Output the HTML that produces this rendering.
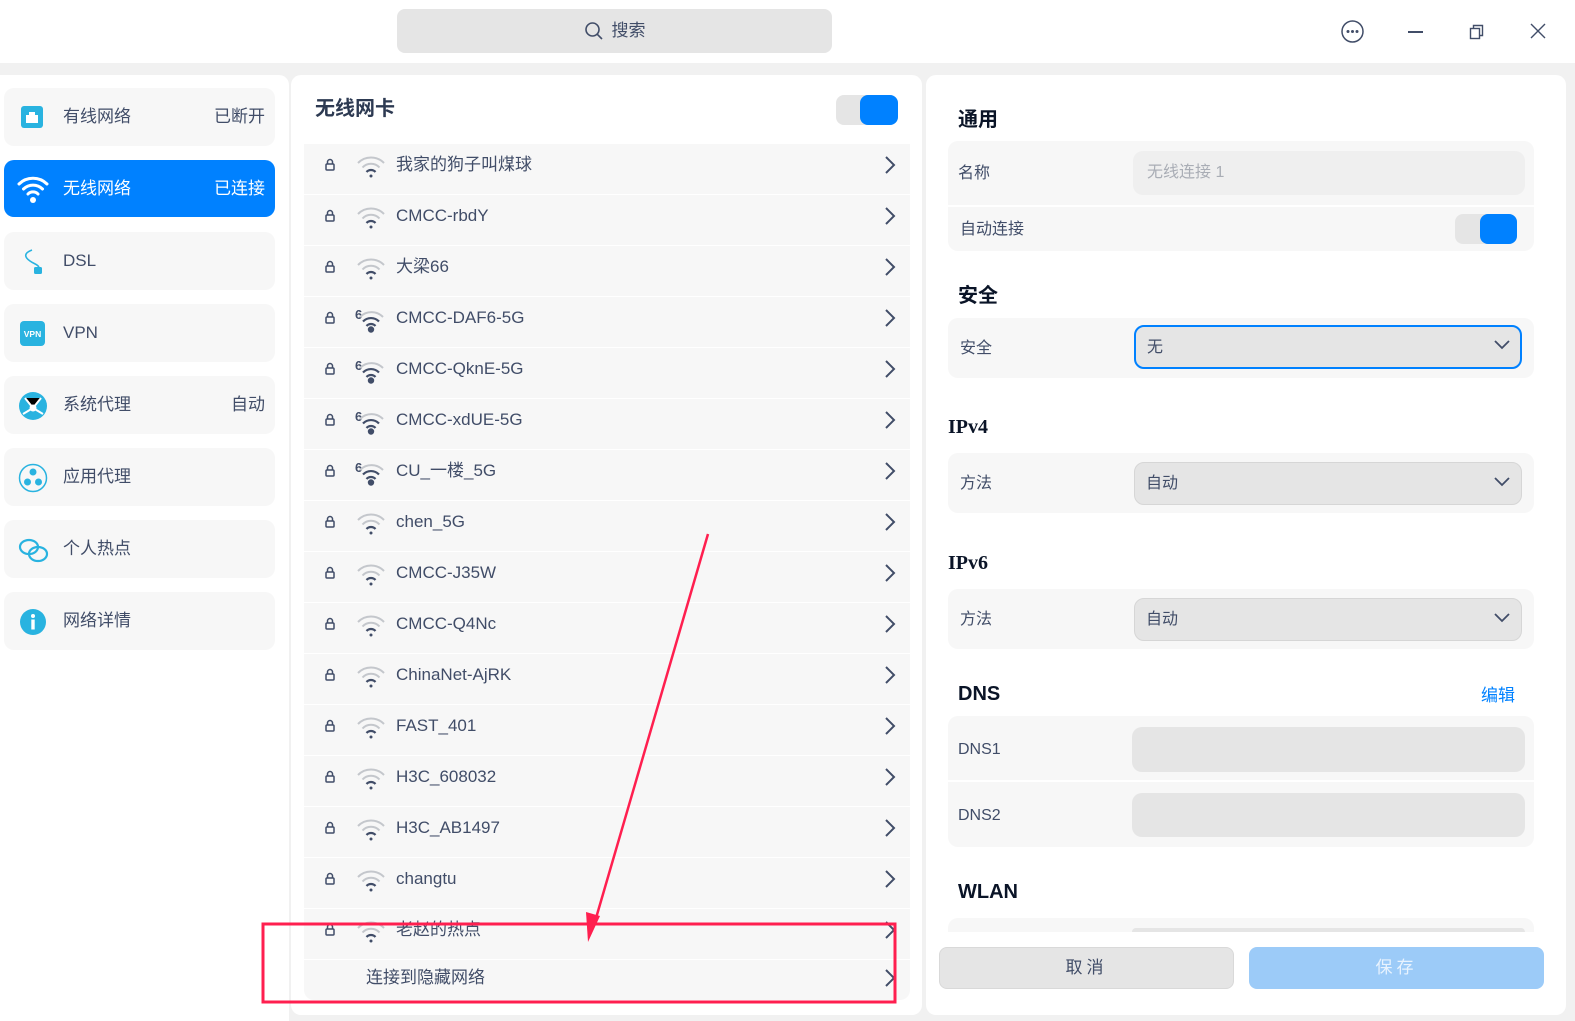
<!DOCTYPE html>
<html><head><meta charset="utf-8">
<style>
*{margin:0;padding:0;box-sizing:border-box}
html,body{overflow:hidden}
body{width:1575px;height:1021px;background:#f1f1f1;position:relative;font-family:"Liberation Sans","Noto Sans CJK SC",sans-serif;color:#414d68;line-height:22px}
.a{position:absolute}
.top{left:0;top:0;width:1575px;height:63px;background:#fff}
.search{left:397px;top:9px;width:435px;height:44px;background:#e5e5e5;border-radius:8px;font-size:17px;color:#414d68;display:flex;align-items:center;justify-content:center;gap:8px}
.panel{background:#fff;border-radius:10px}
.nav{left:4px;width:271px;height:58px;background:#f7f7f7;border-radius:10px;font-size:17px}
.nav .t{position:absolute;left:59px;top:18px}
.nav .r{position:absolute;right:10px;top:18px}
.nav svg{position:absolute;left:14px;top:15px}
.row{left:304px;width:606px;height:50px;background:#f7f7f7;font-size:17px}
.row .lk{position:absolute;left:21px;top:14px}
.row .wf{position:absolute;left:51px;top:8px}
.row .n{position:absolute;left:92px;top:10px;line-height:22px}
.row .ch{position:absolute;left:580px;top:11px}
.h{font-weight:bold;font-size:20px;color:#0a1427}
.grp{left:948px;width:586px;background:#f7f7f7;border-radius:10px}
.lbl{font-size:16px}
.inp{background:#e5e5e5;border-radius:10px}
.sel{background:#e5e5e5;border-radius:10px;border:1px solid #d6d6d6;font-size:16px}
</style></head><body>
<div class="a top"></div>
<div class="a search"><svg width="20" height="20" viewBox="0 0 20 20"><circle cx="8.5" cy="8.5" r="6.5" fill="none" stroke="#414d68" stroke-width="1.6"/><path d="M13.3 13.3L18 18" stroke="#414d68" stroke-width="1.6"/></svg>搜索</div>
<svg class="a" style="left:1340px;top:19px" width="25" height="25" viewBox="0 0 25 25"><circle cx="12.5" cy="12.5" r="10.5" fill="none" stroke="#414d68" stroke-width="1.5"/><circle cx="8" cy="12.5" r="1.5" fill="#414d68"/><circle cx="12.5" cy="12.5" r="1.5" fill="#414d68"/><circle cx="17" cy="12.5" r="1.5" fill="#414d68"/></svg>
<div class="a" style="left:1408px;top:31px;width:15px;height:1.5px;background:#414d68"></div>
<svg class="a" style="left:1469px;top:24px" width="16" height="16" viewBox="0 0 16 16"><rect x="1.5" y="4.5" width="9" height="10" fill="none" stroke="#414d68" stroke-width="1.4"/><path d="M4.5 4.5V1.5h9v10h-3" fill="none" stroke="#414d68" stroke-width="1.4"/></svg>
<svg class="a" style="left:1530px;top:23px" width="16" height="16" viewBox="0 0 16 16"><path d="M1 1L15 15M15 1L1 15" stroke="#414d68" stroke-width="1.4"/></svg>

<div class="a panel" style="left:0;top:75px;width:289px;height:946px;border-radius:0 10px 0 0"></div>
<div class="a panel" style="left:291px;top:75px;width:631px;height:940px"></div>
<div class="a panel" style="left:926px;top:75px;width:640px;height:940px"></div>

<div class="a nav" style="top:88px"><svg width="28" height="28" viewBox="0 0 28 28"><rect x="3" y="3" width="22" height="22" rx="3" fill="#29b3e0"/><path d="M8 20V12h3V9h6v3h3v8z" fill="#fff"/></svg><span class="t">有线网络</span><span class="r">已断开</span></div>
<div class="a nav" style="top:160px;background:#0081ff;color:#fff;height:57px"><svg width="34" height="30" viewBox="0 0 34 30" style="left:12px;top:14px"><path d="M3 10a20 20 0 0 1 28 0M7.5 15a13.5 13.5 0 0 1 19 0M12 20a7 7 0 0 1 10 0" fill="none" stroke="#fff" stroke-width="3" stroke-linecap="round"/><circle cx="17" cy="26" r="3" fill="#fff"/></svg><span class="t">无线网络</span><span class="r">已连接</span></div>
<div class="a nav" style="top:232px"><svg width="28" height="30" viewBox="0 0 28 30"><path d="M14 3C6 6 6 10 12 14c4 3 7 3 9 6" fill="none" stroke="#29b3e0" stroke-width="1.6"/><rect x="16" y="20" width="8" height="7" rx="1.5" fill="#29b3e0"/></svg><span class="t">DSL</span></div>
<div class="a nav" style="top:304px"><svg width="28" height="28" viewBox="0 0 28 28"><rect x="2" y="2" width="25" height="25" rx="4" fill="#29b3e0"/><text x="14.5" y="18" font-size="8.5" font-weight="bold" fill="#fff" text-anchor="middle" font-family="Liberation Sans">VPN</text></svg><span class="t">VPN</span></div>
<div class="a nav" style="top:376px"><svg width="30" height="30" viewBox="0 0 30 30"><circle cx="15" cy="15" r="14" fill="#29b3e0"/><path d="M7 7L15 17L23 7M15 17L5 23M15 17L25 23" stroke="#fff" stroke-width="2"/><circle cx="15" cy="17" r="3.5" fill="#fff"/></svg><span class="t">系统代理</span><span class="r">自动</span></div>
<div class="a nav" style="top:448px"><svg width="30" height="30" viewBox="0 0 30 30"><circle cx="15" cy="15" r="13.5" fill="none" stroke="#29b3e0" stroke-width="1.5"/><circle cx="15" cy="9" r="3.5" fill="#29b3e0"/><circle cx="9.5" cy="19" r="3.5" fill="#29b3e0"/><circle cx="20.5" cy="19" r="3.5" fill="#29b3e0"/></svg><span class="t">应用代理</span></div>
<div class="a nav" style="top:520px"><svg width="32" height="30" viewBox="0 0 32 30"><ellipse cx="11" cy="12" rx="9" ry="7" fill="none" stroke="#29b3e0" stroke-width="2.2"/><ellipse cx="20" cy="19" rx="9" ry="7" fill="none" stroke="#29b3e0" stroke-width="2.2"/></svg><span class="t">个人热点</span></div>
<div class="a nav" style="top:592px"><svg width="30" height="30" viewBox="0 0 30 30"><circle cx="15" cy="15" r="13" fill="#29b3e0"/><circle cx="15" cy="9" r="2" fill="#fff"/><rect x="13.3" y="12.5" width="3.4" height="10" fill="#fff"/></svg><span class="t">网络详情</span></div>

<div class="a" style="left:315px;top:98px;font-size:20px;font-weight:bold;color:#2d3a52">无线网卡</div>
<div class="a" style="left:836px;top:95px;width:62px;height:30px;background:#e5e5e5;border-radius:8px"></div>
<div class="a" style="left:860px;top:95px;width:38px;height:30px;background:#0081ff;border-radius:8px"></div>

<div id="rows"></div>
<script>
var names=["我家的狗子叫煤球","CMCC-rbdY","大梁66","CMCC-DAF6-5G","CMCC-QknE-5G","CMCC-xdUE-5G","CU_一楼_5G","chen_5G","CMCC-J35W","CMCC-Q4Nc","ChinaNet-AjRK","FAST_401","H3C_608032","H3C_AB1497","changtu","老赵的热点"];
var six=[3,4,5,6];var h="";
for(var i=0;i<names.length;i++){var t=144+i*51;var s=six.indexOf(i)>=0;
var wf=s?'<svg class="wf" width="32" height="30" viewBox="0 0 32 30"><text x="0" y="14" font-size="13" font-weight="bold" fill="#414d68" font-family="Liberation Sans">6</text><path d="M5 12a16 16 0 0 1 23 0" fill="none" stroke="#c4c7cc" stroke-width="2"/><path d="M8 16.5a11 11 0 0 1 16 0M11.5 21a6 6 0 0 1 9 0" fill="none" stroke="#414d68" stroke-width="2.2"/><circle cx="16" cy="24.5" r="3.2" fill="#414d68"/></svg>'
:'<svg class="wf" width="32" height="30" viewBox="0 0 32 30"><path d="M3 11a18 18 0 0 1 26 0M7.5 15.5a11.5 11.5 0 0 1 17 0" fill="none" stroke="#c4c7cc" stroke-width="2"/><path d="M11.5 20a6 6 0 0 1 9 0" fill="none" stroke="#414d68" stroke-width="2.2"/><circle cx="16" cy="24" r="1.5" fill="#414d68"/></svg>';
h+='<div class="a row" style="top:'+t+'px"><svg class="lk" width="10" height="14" viewBox="0 0 10 14"><path d="M2.5 6V4a2.5 2.5 0 0 1 5 0v2" fill="none" stroke="#414d68" stroke-width="1.5"/><rect x="1" y="6" width="8" height="6" rx="1" fill="none" stroke="#414d68" stroke-width="1.5"/></svg>'+wf+'<span class="n">'+names[i]+'</span><svg class="ch" width="12" height="20" viewBox="0 0 12 20"><path d="M2 2l8 8-8 8" fill="none" stroke="#414d68" stroke-width="2"/></svg></div>';}
h+='<div class="a row" style="top:960px;height:40px;border-radius:0 0 10px 10px"><span class="n" style="left:62px;top:7px">连接到隐藏网络</span><svg class="ch" style="top:8px" width="12" height="20" viewBox="0 0 12 20"><path d="M2 2l8 8-8 8" fill="none" stroke="#414d68" stroke-width="2"/></svg></div>';
document.getElementById("rows").innerHTML=h;
</script>

<div class="a h" style="left:958px;top:109px">通用</div>
<div class="a grp" style="top:141px;height:110px"></div>
<div class="a" style="left:948px;top:205px;width:586px;height:2px;background:#fff"></div>
<div class="a lbl" style="left:958px;top:163px">名称</div>
<div class="a inp" style="left:1133px;top:151px;width:392px;height:44px;background:#efefef;color:#a9adb5;font-size:16px;padding:11px 14px">无线连接 1</div>
<div class="a lbl" style="left:960px;top:219px">自动连接</div>
<div class="a" style="left:1455px;top:214px;width:62px;height:30px;background:#e5e5e5;border-radius:8px"></div>
<div class="a" style="left:1480px;top:214px;width:37px;height:30px;background:#0081ff;border-radius:8px"></div>

<div class="a h" style="left:958px;top:285px">安全</div>
<div class="a grp" style="top:318px;height:60px"></div>
<div class="a lbl" style="left:960px;top:338px">安全</div>
<div class="a sel" style="left:1134px;top:325px;width:388px;height:44px;border:2px solid #0081ff;padding:10px 11px">无</div>

<div class="a h" style="left:948px;top:416px;font-family:'Liberation Serif',serif">IPv4</div>
<div class="a grp" style="top:453px;height:60px"></div>
<div class="a lbl" style="left:960px;top:473px">方法</div>
<div class="a sel" style="left:1134px;top:462px;width:388px;height:43px;padding:10px 11px">自动</div>

<div class="a h" style="left:948px;top:552px;font-family:'Liberation Serif',serif">IPv6</div>
<div class="a grp" style="top:589px;height:60px"></div>
<div class="a lbl" style="left:960px;top:609px">方法</div>
<div class="a sel" style="left:1134px;top:598px;width:388px;height:43px;padding:10px 11px">自动</div>
<svg class="a" style="left:1494px;top:340px" width="16" height="10" viewBox="0 0 16 10"><path d="M1 1l7 7 7-7" fill="none" stroke="#414d68" stroke-width="1.8"/></svg>
<svg class="a" style="left:1494px;top:477px" width="16" height="10" viewBox="0 0 16 10"><path d="M1 1l7 7 7-7" fill="none" stroke="#414d68" stroke-width="1.8"/></svg>
<svg class="a" style="left:1494px;top:613px" width="16" height="10" viewBox="0 0 16 10"><path d="M1 1l7 7 7-7" fill="none" stroke="#414d68" stroke-width="1.8"/></svg>

<div class="a h" style="left:958px;top:683px">DNS</div>
<div class="a" style="left:1481px;top:685px;color:#0081ff;font-size:17px">编辑</div>
<div class="a grp" style="top:716px;height:131px"></div>
<div class="a" style="left:948px;top:780px;width:586px;height:2px;background:#fff"></div>
<div class="a lbl" style="left:958px;top:739px">DNS1</div>
<div class="a lbl" style="left:958px;top:805px">DNS2</div>
<div class="a inp" style="left:1132px;top:727px;width:393px;height:45px"></div>
<div class="a inp" style="left:1132px;top:793px;width:393px;height:44px"></div>

<div class="a h" style="left:958px;top:881px">WLAN</div>
<div class="a grp" style="top:918px;height:14px;border-radius:10px 10px 0 0"></div>
<div class="a inp" style="left:1132px;top:928px;width:393px;height:4px;border-radius:6px 6px 0 0"></div>

<div class="a" style="left:939px;top:947px;width:295px;height:42px;background:#e5e5e5;border:1px solid #d9d9d9;border-radius:8px;text-align:center;line-height:40px;font-size:17px;letter-spacing:4px">取消</div>
<div class="a" style="left:1249px;top:947px;width:295px;height:42px;background:#9ccbf8;border-radius:8px;text-align:center;line-height:42px;font-size:17px;color:#e8f3fe;letter-spacing:4px">保存</div>

<svg class="a" style="left:0;top:0" width="1575" height="1021">
<rect x="263" y="924" width="632" height="78" fill="none" stroke="#ff1f4f" stroke-width="3"/>
<line x1="708" y1="534" x2="594" y2="925" stroke="#ff1f4f" stroke-width="2.5"/>
<path d="M588 942L586 912L600 916Z" fill="#ff1f4f"/>
</svg>
</body></html>
